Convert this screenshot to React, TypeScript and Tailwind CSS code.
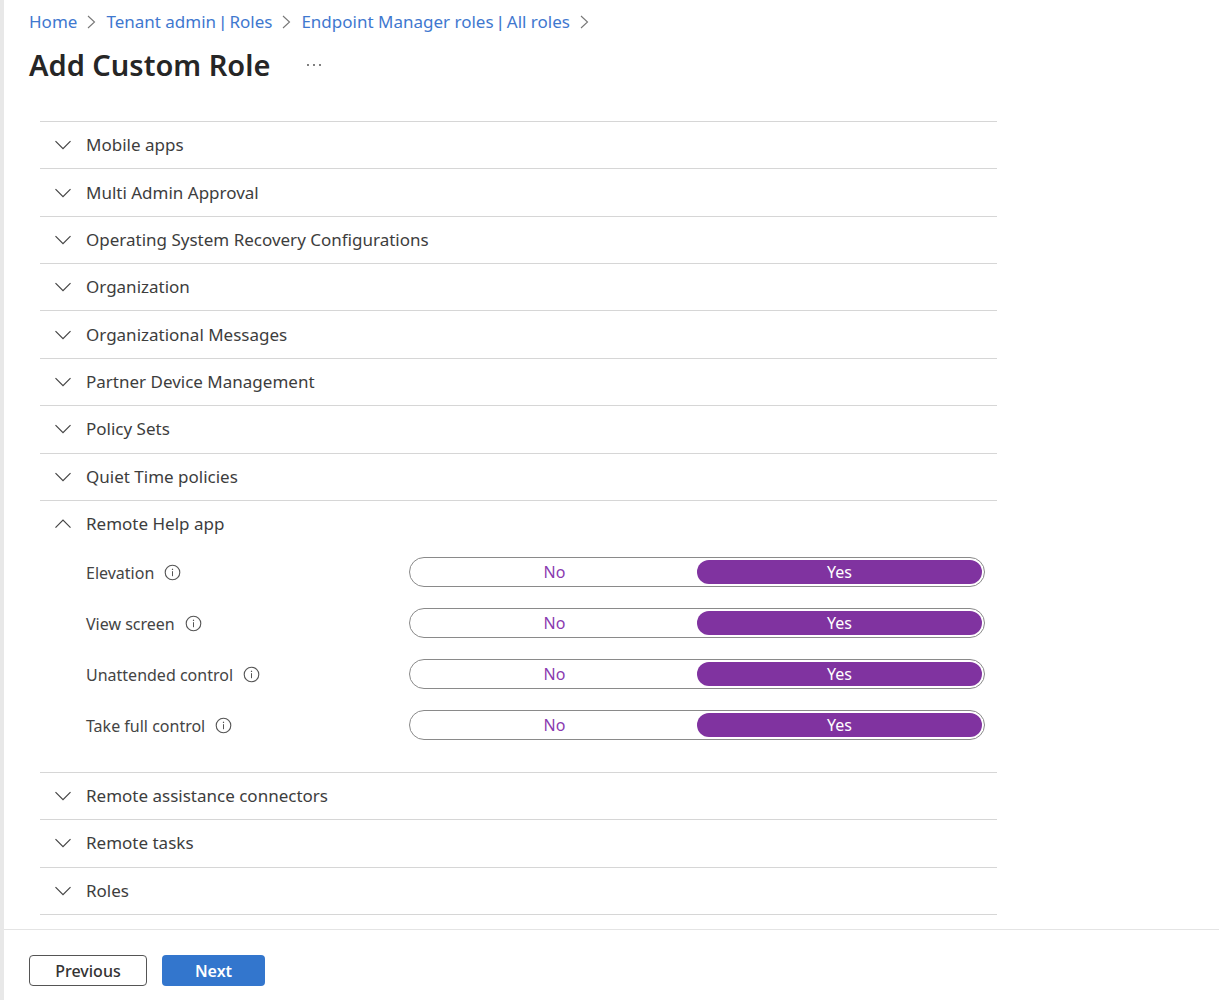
import { useState } from "react";

const breadcrumbs = [["Home"], ["Tenant admin", "Roles"], ["Endpoint Manager roles", "All roles"]];

const sectionsBefore = [
  "Mobile apps",
  "Multi Admin Approval",
  "Operating System Recovery Configurations",
  "Organization",
  "Organizational Messages",
  "Partner Device Management",
  "Policy Sets",
  "Quiet Time policies",
];

const permissions = ["Elevation", "View screen", "Unattended control", "Take full control"];

const sectionsAfter = ["Remote assistance connectors", "Remote tasks", "Roles"];

function Chevron({ up = false }: { up?: boolean }) {
  return (
    <svg width="16" height="10" viewBox="0 0 16 10" fill="none" stroke="#444" strokeWidth="1.2" aria-hidden="true">
      <path d={up ? "M0.5 8.7 8 1.2l7.5 7.5" : "M0.5 1.2 8 8.7l7.5-7.5"} />
    </svg>
  );
}

function Crumb({ parts }: { parts: string[] }) {
  return (
    <li className="flex items-center">
      <a href="#" className="text-[#3f78cf]">
        {parts[0]}
        {parts[1] && (
          <>
            {" "}
            <span className="font-['Liberation_Sans',sans-serif] leading-none">|</span> {parts[1]}
          </>
        )}
      </a>
      <svg className="mx-2.5" width="9" height="14" viewBox="0 0 9 14" fill="none" stroke="#777" strokeWidth="1.1" aria-hidden="true">
        <path d="M1 1l6.5 6L1 13" />
      </svg>
    </li>
  );
}

function SectionHeader({ title, open = false }: { title: string; open?: boolean }) {
  return (
    <button
      type="button"
      aria-expanded={open}
      className="flex min-h-[46px] w-full grow items-center gap-[15px] pl-[15px] text-left text-[17px] leading-6 text-[#3d3d3d]"
    >
      <Chevron up={open} />
      {title}
    </button>
  );
}

function Permission({ label }: { label: string }) {
  const [value, setValue] = useState("Yes");
  const labelId = label.toLowerCase().replaceAll(" ", "-");
  return (
    <div role="radiogroup" aria-labelledby={labelId} className="flex h-[51px] items-start">
      <div className="flex w-[323px] shrink-0 items-center gap-2.5 pt-1 text-[16px] leading-6 text-[#444]">
        <span id={labelId}>{label}</span>
        <button type="button" aria-label={`About ${label}`}>
          <svg width="17" height="17" viewBox="0 0 17 17" fill="none" stroke="#555" aria-hidden="true">
            <circle cx="8.5" cy="8.5" r="7.3" strokeWidth="1.1" />
            <path d="M8.5 7.2v5" strokeWidth="1" />
            <path d="M8.5 4.7v1.3" strokeWidth="1.2" />
          </svg>
        </button>
      </div>
      <div className="flex h-[30px] flex-1 rounded-full border border-[#8a8a8a] p-0.5 text-[16px]">
        {["No", "Yes"].map((option) => (
          <label
            key={option}
            className="relative flex flex-1 cursor-pointer items-center justify-center rounded-full leading-6 text-[#8a3ab0] has-checked:bg-[#8033a0] has-checked:text-white"
          >
            <input
              type="radio"
              className="absolute inset-0 cursor-pointer appearance-none"
              name={label}
              value={option}
              checked={value === option}
              onChange={() => setValue(option)}
            />
            {option}
          </label>
        ))}
      </div>
    </div>
  );
}

export default function App() {
  return (
    <div className="flex min-h-screen flex-col border-l-4 border-[#e8e8e8] bg-white font-['Noto_Sans','Open_Sans',sans-serif] text-[#262626]">
      <header className="pl-[25px]">
        <nav aria-label="Breadcrumb" className="pt-2.5">
          <ol className="flex items-center text-[17px] leading-6">
            {breadcrumbs.map((parts) => (
              <Crumb key={parts[0]} parts={parts} />
            ))}
          </ol>
        </nav>
        <div className="flex items-center gap-9 pt-2.5">
          <h1 className="text-[29px] leading-[42px] font-semibold">Add Custom Role</h1>
          <button type="button" aria-label="More actions">
            <svg width="16" height="4" viewBox="0 0 16 4" fill="#444" aria-hidden="true">
              <circle cx="2" cy="2" r="0.9" />
              <circle cx="8" cy="2" r="0.9" />
              <circle cx="14" cy="2" r="0.9" />
            </svg>
          </button>
        </div>
      </header>

      <main className="mt-[35px] mr-[222px] mb-[14px] ml-9 flex grow flex-col border-b border-[#d6d6d6]">
        {sectionsBefore.map((title) => (
          <section key={title} className="flex grow flex-col border-t border-[#d6d6d6]">
            <SectionHeader title={title} />
          </section>
        ))}
        <section className="border-t border-[#d6d6d6]">
          <SectionHeader title="Remote Help app" open />
          <div className="pt-2.5 pr-3 pb-[11px] pl-[46px]">
            {permissions.map((label) => (
              <Permission key={label} label={label} />
            ))}
          </div>
        </section>
        {sectionsAfter.map((title) => (
          <section key={title} className="flex grow flex-col border-t border-[#d6d6d6]">
            <SectionHeader title={title} />
          </section>
        ))}
      </main>

      <footer className="flex gap-[15px] border-t border-[#e4e4e4] pt-[25px] pb-[14px] pl-[25px] text-[16px] leading-6 font-medium">
        <button type="button" className="h-[31px] w-[118px] rounded-sm border border-[#555] text-[#333]">
          Previous
        </button>
        <button type="button" className="h-[31px] w-[103px] rounded-sm bg-[#3376cd] font-semibold text-white">
          Next
        </button>
      </footer>
    </div>
  );
}
